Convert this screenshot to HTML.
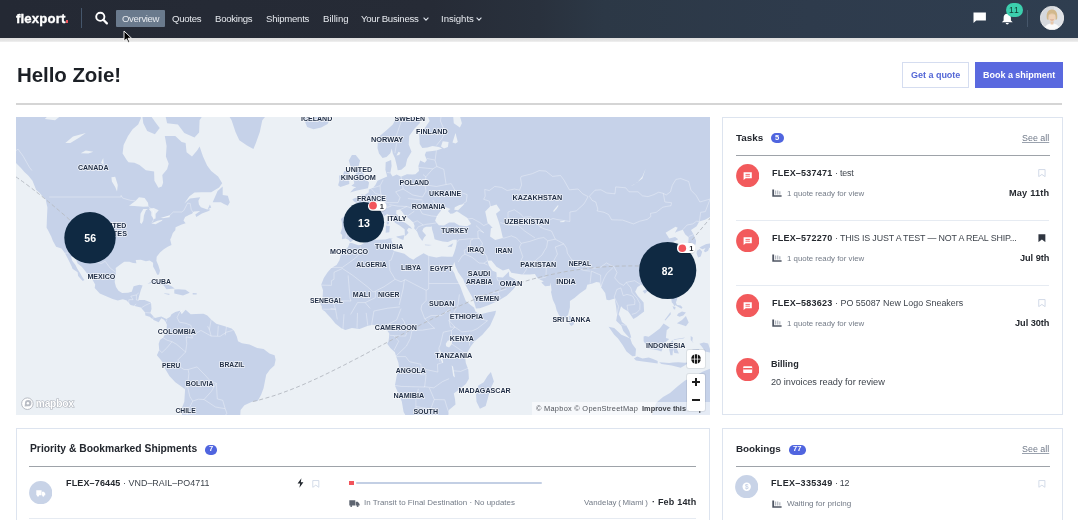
<!DOCTYPE html>
<html><head><meta charset="utf-8">
<style>
*{box-sizing:border-box;margin:0;padding:0}
body>div,body>svg{will-change:transform}
html,body{width:1078px;height:520px;overflow:hidden;background:#fff;font-family:"Liberation Sans",sans-serif;color:#1f2329}
.abs{position:absolute}
.a{position:absolute}
.t{position:absolute;white-space:nowrap}
#nav{position:absolute;left:0;top:0;width:1078px;height:38px;background:linear-gradient(90deg,#262b35 0%,#282f3a 40%,#2d3a4a 80%,#2f3e50 100%)}
#navshadow{position:absolute;left:0;top:38px;width:1078px;height:3px;background:linear-gradient(#dcdcdc,#f4f4f4)}
.nl{position:absolute;top:11px;font-size:9.2px;color:#e8ebef;line-height:12px;white-space:nowrap}
.panel{position:absolute;border:1px solid #dfe6f1;background:#fff}
#map{position:absolute;left:16px;top:117px;width:694px;height:298px;background:#ebf0f5;overflow:hidden}
#map svg{position:absolute;left:0;top:0}
.land{fill:#c6d2e9}
.water{fill:#ebf0f5}
.lb text{font-size:7.6px;font-weight:bold;fill:#1f2d45;text-anchor:middle;stroke:#fff;stroke-width:1.6px;stroke-opacity:.75;paint-order:stroke;stroke-linejoin:round}
.lbl{position:absolute;font-size:6.6px;font-weight:bold;color:#2b3445;letter-spacing:0.1px;white-space:nowrap;text-shadow:0 0 1px #fff,0 0 2px #fff}
</style></head><body>
<div class="a" style="left:0;top:0;width:1078px;height:38.4px;background:linear-gradient(90deg,#242934 0%,#262b36 40%,#29313d 50%,#2c3846 56%,#2e3b4c 75%,#2f3e50 100%)"></div>
<div class="a" style="left:0.00px;top:38.40px;width:1078.00px;height:3.60px;background:linear-gradient(#dedede,#e6e6e6 70%,#f2f2f2);"></div>
<div class="t" style="left:15.90px;top:11.53px;font-size:13.2px;line-height:13.2px;color:#fff;font-weight:bold;letter-spacing:0.137px;-webkit-text-stroke:0.35px #fff;">flexport</div>
<div class="a" style="left:65.70px;top:20.20px;width:2.20px;height:2.50px;background:#f2545b;"></div>
<div class="a" style="left:81.00px;top:8.00px;width:1.00px;height:19.50px;background:#45566b;"></div>
<svg class="a" style="left:94px;top:11px" width="15" height="14" viewBox="0 0 15 14"><circle cx="6.3" cy="5.8" r="4.1" fill="none" stroke="#fff" stroke-width="1.9"/><path d="M9.3 8.8L12.9 12.4" stroke="#fff" stroke-width="2.2" stroke-linecap="round"/></svg>
<div class="a" style="left:116.30px;top:9.70px;width:48.50px;height:17.00px;background:#6a7a8d;border-radius:1px;"></div>
<div class="t" style="left:122.00px;top:13.87px;font-size:9.6px;line-height:9.6px;color:#e6e9ee;letter-spacing:-0.351px;">Overview</div>
<div class="t" style="left:172.10px;top:13.87px;font-size:9.6px;line-height:9.6px;color:#e6e9ee;letter-spacing:-0.258px;">Quotes</div>
<div class="t" style="left:214.80px;top:13.87px;font-size:9.6px;line-height:9.6px;color:#e6e9ee;letter-spacing:-0.261px;">Bookings</div>
<div class="t" style="left:265.60px;top:13.87px;font-size:9.6px;line-height:9.6px;color:#e6e9ee;letter-spacing:-0.239px;">Shipments</div>
<div class="t" style="left:322.60px;top:13.87px;font-size:9.6px;line-height:9.6px;color:#e6e9ee;letter-spacing:-0.002px;">Billing</div>
<div class="t" style="left:361.00px;top:13.87px;font-size:9.6px;line-height:9.6px;color:#e6e9ee;letter-spacing:-0.263px;">Your Business</div>
<div class="t" style="left:440.70px;top:13.87px;font-size:9.6px;line-height:9.6px;color:#e6e9ee;letter-spacing:-0.035px;">Insights</div>
<svg class="a" style="left:422.5px;top:17.2px" width="6" height="4" viewBox="0 0 6 4"><path d="M0.6 0.7L3 3.1L5.4 0.7" fill="none" stroke="#dfe4ec" stroke-width="1.1"/></svg>
<svg class="a" style="left:476.3px;top:17.2px" width="6" height="4" viewBox="0 0 6 4"><path d="M0.6 0.7L3 3.1L5.4 0.7" fill="none" stroke="#dfe4ec" stroke-width="1.1"/></svg>
<svg class="a" style="left:973px;top:11.5px" width="13.5" height="11.5" viewBox="0 0 13.5 11.5"><path d="M0.5 0.5H12.9V8.4H3.2L0.5 11Z" fill="#fff"/></svg>
<svg class="a" style="left:1000.5px;top:12.5px" width="12.5" height="11.5" viewBox="0 0 12.5 11.5"><path d="M6.25 0.8C3.6 0.8 2.6 2.8 2.6 5V7.6L0.8 9.2H11.7L9.9 7.6V5C9.9 2.8 8.9 0.8 6.25 0.8Z" fill="#fff"/><path d="M4.7 10H7.8A1.55 1.4 0 0 1 4.7 10Z" fill="#fff"/></svg>
<div class="a" style="left:1005.70px;top:3.30px;width:16.50px;height:13.50px;background:#3ccfae;border-radius:7px;"></div>
<div class="t" style="left:1008.50px;top:6.32px;font-size:8.6px;line-height:8.6px;color:#113a33;letter-spacing:0.787px;">11</div>
<div class="a" style="left:1027.20px;top:9.90px;width:1.00px;height:16.50px;background:#46576b;"></div>
<svg class="a" style="left:1040px;top:6px" width="24" height="24" viewBox="0 0 24 24"><defs><clipPath id="av"><circle cx="12" cy="12" r="11.6"/></clipPath></defs><g clip-path="url(#av)"><rect x="0" y="0" width="24" height="24" fill="#d5d8dc"/><rect x="14" y="0" width="10" height="24" fill="#dfe2e6"/><path d="M4 24C5 19 8.5 17.6 12 17.6S19 19 20 24Z" fill="#fafafa"/><path d="M10.6 15.5H13.4V18.5H10.6Z" fill="#e8c7aa"/><path d="M6.8 12.5C6 6.5 8.4 3.6 12 3.6S18 6.5 17.2 12.5C16.6 14 15.8 14.2 15.5 13.5L15.2 9C14 7.8 10 7.8 8.8 9L8.5 13.5C8.2 14.2 7.4 14 6.8 12.5Z" fill="#d2b88c"/><ellipse cx="12" cy="11.6" rx="3.3" ry="4" fill="#efd2b8"/><path d="M8.5 9.2C9.5 6.8 14.5 6.8 15.5 9.2C14 8 10 8 8.5 9.2Z" fill="#d9c29a"/><path d="M10.4 13.6Q12 14.6 13.6 13.6" stroke="#c08a78" stroke-width="0.6" fill="none"/></g><circle cx="12" cy="12" r="11.7" fill="none" stroke="#f0f0f0" stroke-width="0.8"/></svg>
<div class="t" style="left:17.00px;top:65.35px;font-size:20.5px;line-height:20.5px;color:#1c2026;font-weight:bold;letter-spacing:-0.070px;">Hello Zoie!</div>
<div class="a" style="left:901.50px;top:62.00px;width:67.40px;height:26.00px;background:#fff;border:1px solid #d5ddf0;box-sizing:border-box;"></div>
<div class="t" style="left:910.70px;top:71.38px;font-size:9px;line-height:9px;color:#5467d6;font-weight:bold;letter-spacing:-0.018px;">Get a quote</div>
<div class="a" style="left:974.50px;top:62.00px;width:87.70px;height:26.00px;background:#5a69df;"></div>
<div class="t" style="left:982.70px;top:71.38px;font-size:9px;line-height:9px;color:#fff;font-weight:bold;letter-spacing:-0.020px;">Book a shipment</div>
<div class="a" style="left:16.00px;top:103.00px;width:1046.00px;height:1.50px;background:#d5d5d5;"></div>
<svg class="a" style="left:120px;top:28px;z-index:50" width="16" height="18" viewBox="120 28 16 18"><path d="M124 31L124 41.2L126.4 38.9L128.2 42.4L129.7 41.7L128 38.3L131.5 38.2Z" fill="#000" stroke="#fff" stroke-width="0.9" stroke-linejoin="round"/></svg>

<!-- map -->
<div id="map"><svg width="694" height="298" viewBox="0 0 694 298"><defs><filter id="sh" x="-30%" y="-50%" width="160%" height="200%"><feDropShadow dx="0" dy="0.5" stdDeviation="0.7" flood-color="#000" flood-opacity="0.25"/></filter></defs><path class="land" d="M-35.2 -73.1L124.8 -73.1L124.8 1.5L122.2 7.5L116.6 12.2L112.0 18.9L107.6 28.0L106.6 36.6L110.7 43.0L112.5 45.3L118.4 45.8L123.5 48.1L129.9 53.2L138.1 54.5L138.4 63.7L142.4 70.8L145.8 69.5L147.1 65.8L146.3 58.1L151.1 52.3L152.7 46.7L149.9 39.6L150.6 29.0L148.8 18.9L159.3 18.9L165.7 24.9L169.6 25.9L170.6 35.2L176.0 39.6L181.1 33.6L183.6 29.6L187.0 39.6L191.1 48.6L195.2 54.1L202.1 59.4L206.2 66.2L203.1 70.4L195.2 75.2L184.9 75.2L178.5 75.6L173.4 79.2L168.3 86.5L173.9 81.5L184.2 80.3L182.4 83.8L182.9 87.6L184.9 90.2L191.3 92.4L195.2 90.6L193.9 87.6L191.8 92.1L194.4 92.8L192.6 93.9L185.9 96.4L180.3 100.0L179.3 97.5L184.2 93.9L177.8 94.6L176.0 96.8L173.4 97.8L169.1 100.0L167.5 103.5L169.6 106.2L165.7 107.6L159.6 110.3L159.3 113.3L156.8 116.0L155.2 120.5L154.2 122.5L155.5 127.9L151.7 129.7L147.8 132.2L144.0 135.6L140.7 139.8L140.4 143.7L142.4 148.4L144.0 153.8L143.0 157.5L141.2 157.8L139.4 153.8L137.1 149.5L137.1 145.7L133.7 143.4L129.9 144.3L124.8 142.8L119.7 143.1L120.4 146.3L117.1 146.0L113.3 144.8L108.2 144.8L104.3 147.5L99.7 151.0L100.0 155.5L98.7 165.1L100.0 170.0L102.5 173.8L106.1 176.0L112.0 175.7L115.8 174.7L117.6 169.2L123.5 167.8L126.6 168.4L124.8 173.3L123.0 179.5L122.2 183.0L128.6 183.0L135.0 185.4L135.5 192.0L134.3 195.9L138.9 201.1L145.3 199.5L150.4 202.1L154.2 199.8L155.5 197.2L159.3 195.1L163.9 193.8L165.7 197.2L169.6 192.7L174.7 197.2L179.8 196.9L187.5 196.7L191.3 198.5L195.2 202.4L200.3 206.8L208.0 209.1L215.6 211.6L218.2 214.0L220.8 219.6L222.0 224.2L225.9 226.2L233.5 227.5L241.2 231.1L247.6 231.9L253.5 236.5L258.6 238.3L259.6 242.7L258.4 248.6L254.0 252.5L250.2 257.8L248.9 264.4L247.6 271.0L245.1 277.8L241.7 284.1L236.1 284.7L228.4 288.3L224.6 293.1L224.1 300.3L220.8 307.7L195.2 336.1L164.5 336.1L165.7 304.7L166.2 290.3L168.3 284.7L169.1 272.4L165.7 269.7L159.3 265.2L153.4 259.1L149.6 252.5L145.3 243.4L140.9 238.3L143.2 232.9L142.7 226.8L144.0 222.9L147.1 220.4L150.4 215.2L150.9 207.5L148.3 203.1L145.3 201.3L142.7 205.2L137.6 203.1L133.7 199.8L129.4 198.5L129.1 195.4L124.8 190.6L119.7 189.3L114.6 188.0L110.7 183.5L106.9 182.2L101.8 183.5L96.6 181.9L90.2 179.2L83.8 176.6L78.7 171.1L79.2 167.6L76.2 162.3L72.3 158.1L69.0 153.8L65.7 149.8L61.6 146.6L59.5 141.3L54.9 138.9L56.2 143.7L59.5 148.1L61.3 151.8L63.9 155.8L66.4 160.3L68.5 163.1L66.7 164.0L62.1 158.9L61.6 155.3L56.5 151.8L55.7 149.5L52.4 142.8L49.0 136.2L45.5 131.6L40.1 129.7L36.8 123.8L35.2 119.6L31.9 113.0L30.6 110.7L30.9 102.1L31.4 90.6L29.6 82.3L27.5 80.3L23.7 76.0L20.1 72.8L16.5 63.7L12.2 58.5L8.4 55.0L4.5 50.4L-0.1 45.8L-4.4 40.1L-9.6 32.1L-35.2 31.1ZM126.1 -2.8L133.7 -2.8L140.1 6.3L143.7 11.0L138.9 17.2L131.2 13.9L127.3 6.3ZM149.1 -2.8L187.5 -2.8L183.6 3.3L183.1 15.6L178.5 20.5L168.3 16.1L161.9 7.5L151.1 6.3ZM208.0 -9.3L215.6 3.3L219.5 15.0L223.3 23.3L231.0 28.5L237.4 32.1L239.9 25.9L243.8 15.0L246.3 3.3L256.6 -9.3ZM196.7 85.3L201.6 74.0L206.7 69.5L206.7 78.0L211.8 78.8L213.8 85.3L211.8 88.7L208.0 86.9L204.9 85.3ZM131.4 166.7L137.6 163.4L142.7 163.7L150.4 167.0L155.5 169.2L158.8 171.4L150.4 172.2L147.8 168.4L141.4 166.5L135.8 165.9ZM158.3 172.5L162.4 172.2L169.6 172.8L173.7 175.7L167.0 178.4L158.3 176.6ZM176.7 176.0L180.8 176.3L180.6 177.4L176.7 177.4ZM148.3 176.3L153.4 176.8L153.4 177.9L148.3 176.8ZM380.7 -73.1L380.7 0.3L376.8 7.5L370.5 13.3L362.0 20.5L361.5 31.1L363.0 36.6L366.6 41.0L370.5 40.1L374.3 36.2L375.8 31.6L376.8 36.6L378.9 41.0L380.9 49.1L381.7 53.2L385.3 52.7L389.6 49.1L391.2 42.0L395.5 34.7L392.7 27.5L393.2 18.9L398.6 11.6L403.7 6.3L405.8 -1.6L411.4 -1.6L413.7 3.9L408.8 11.0L403.2 16.7L403.7 27.0L406.3 31.1L411.4 30.6L416.5 29.0L422.9 30.1L426.2 31.6L420.4 33.6L410.1 34.7L408.8 38.1L410.9 43.0L408.8 45.8L404.2 43.4L402.4 49.1L403.0 54.1L399.4 57.2L396.3 57.6L390.9 57.2L385.0 59.8L380.7 57.6L376.6 59.4L374.3 55.9L375.6 49.1L375.1 43.0L369.7 45.3L369.4 52.7L371.2 59.4L366.6 61.5L361.5 63.7L359.4 67.9L357.1 70.8L352.8 72.4L352.8 75.2L348.7 78.0L345.4 77.6L343.8 81.1L339.7 80.7L336.4 82.3L338.0 84.6L342.3 86.5L345.6 90.6L345.4 96.8L344.1 100.7L338.5 100.3L333.3 100.0L328.2 99.6L324.9 102.1L325.9 105.6L326.2 110.7L324.4 116.3L326.2 118.0L325.9 122.2L329.5 121.5L332.6 122.8L334.4 125.3L337.2 123.1L343.1 122.8L347.4 118.3L349.2 116.3L347.9 114.0L351.0 109.0L356.9 105.6L356.6 101.7L360.2 100.7L364.1 101.7L367.9 99.3L371.2 97.1L374.8 98.9L375.6 102.4L379.4 105.9L383.2 108.3L388.6 112.3L388.9 118.3L389.6 118.9L390.9 117.6L392.5 115.7L390.9 113.3L392.7 110.7L396.0 112.0L394.8 110.0L389.6 105.9L384.5 103.8L383.2 100.0L380.2 96.8L380.4 93.2L383.8 92.4L385.8 94.2L387.9 97.5L393.5 102.1L397.3 105.6L398.6 109.0L398.1 111.3L401.2 114.7L403.0 119.6L406.3 124.1L408.1 120.5L410.1 118.3L406.3 114.0L407.6 111.0L410.1 109.7L415.2 109.7L415.7 109.0L416.0 112.3L417.5 117.3L418.6 122.2L420.9 123.1L426.7 124.4L431.9 125.0L437.0 122.8L440.8 122.8L440.6 126.9L439.5 131.6L438.0 136.2L436.5 139.8L431.4 139.8L425.5 139.5L420.4 140.4L412.7 138.9L407.6 136.2L399.9 140.7L397.3 142.8L393.5 140.7L388.4 136.8L382.0 135.0L378.1 134.0L375.1 131.6L376.8 126.9L375.1 122.5L376.8 121.8L373.8 121.2L369.2 122.5L361.5 122.8L356.4 122.8L351.3 124.1L344.9 127.9L342.3 128.2L335.9 126.0L333.6 126.0L332.1 130.0L329.5 132.8L324.9 136.5L323.6 143.1L320.6 148.1L315.4 151.0L311.6 155.3L307.8 160.9L305.2 167.8L307.0 173.3L306.5 181.4L303.9 186.2L305.7 189.3L306.0 192.5L309.0 194.6L311.1 196.9L314.9 201.1L319.3 206.5L325.7 211.4L329.5 212.9L335.9 211.1L343.6 211.9L351.3 209.1L356.4 207.8L360.2 208.3L364.1 213.2L367.9 212.7L371.2 213.4L373.3 216.5L373.0 220.4L372.5 224.2L371.2 226.8L374.3 231.1L378.9 235.2L380.2 239.6L382.5 246.0L383.2 251.7L380.7 259.1L378.9 268.4L385.8 284.4L387.6 295.1L390.9 300.6L393.5 307.7L399.9 323.1L425.5 319.9L431.9 301.8L432.9 293.1L439.5 287.5L439.0 281.9L437.8 276.5L442.1 273.2L449.8 267.0L452.9 261.7L452.3 252.5L449.8 246.0L449.3 241.6L451.1 235.7L454.9 229.3L458.7 224.2L466.4 217.8L474.1 208.8L479.2 197.2L480.0 193.8L471.5 195.4L463.9 197.4L459.5 194.6L458.0 190.6L454.9 188.3L449.8 184.0L447.2 177.4L444.2 169.2L440.1 161.2L438.3 156.1L435.2 151.5L432.1 144.0L433.1 148.1L436.5 150.1L438.3 145.1L439.5 149.5L442.1 155.3L447.2 162.3L449.3 167.8L452.3 173.3L456.2 180.0L458.2 185.4L460.0 191.4L463.9 191.2L472.8 188.0L482.3 183.8L490.7 178.7L494.6 174.9L498.4 170.9L501.7 165.1L498.4 162.0L493.3 159.5L492.8 154.4L490.7 156.7L486.9 160.6L480.7 160.1L480.5 155.5L479.7 155.0L476.6 153.8L472.8 148.6L471.5 143.7L475.4 143.4L477.9 146.6L480.5 149.8L486.9 153.5L492.8 151.8L495.3 155.8L506.1 157.5L513.8 157.5L518.9 157.0L521.4 160.9L524.8 163.1L527.8 164.3L525.3 165.4L529.1 169.2L534.2 168.7L534.7 165.6L535.5 173.3L535.0 174.9L536.8 182.7L539.3 188.0L540.6 193.3L543.2 198.5L547.0 203.4L549.6 201.1L552.1 197.7L553.9 190.6L553.9 184.0L558.5 181.1L563.7 176.6L570.1 171.9L571.3 167.8L576.5 166.5L580.3 165.1L583.6 165.6L584.9 170.0L589.2 176.0L590.5 182.7L593.1 183.2L598.7 181.4L600.2 190.6L601.0 198.5L600.2 203.7L605.4 208.8L607.2 214.0L610.5 217.8L613.6 220.9L615.3 220.4L613.3 214.0L610.2 208.3L605.9 205.0L604.3 200.3L602.6 197.2L605.1 189.3L607.2 191.4L612.3 194.6L617.4 201.9L621.2 199.8L628.1 194.6L627.6 185.4L621.7 178.7L619.2 174.7L621.5 170.0L625.1 167.8L630.2 169.2L631.5 171.1L634.0 167.8L639.1 165.9L646.8 164.0L653.2 158.1L655.8 153.3L659.9 148.1L660.9 143.7L658.3 141.3L660.4 138.6L657.1 134.7L654.0 128.5L656.5 125.3L662.2 122.2L659.1 119.9L653.2 121.5L651.2 118.3L649.6 115.7L654.5 112.7L659.6 109.7L661.7 110.7L658.9 115.7L660.9 114.7L666.8 112.7L669.1 117.3L672.7 120.5L671.9 128.5L675.0 129.7L679.6 127.5L680.1 123.8L677.5 117.3L675.0 113.0L680.6 109.3L683.2 104.5L689.0 102.8L695.4 99.3L707.0 83.8L719.8 -73.1ZM334.1 75.6L341.0 73.6L352.0 71.2L353.1 65.4L349.5 62.0L347.9 57.2L344.6 52.3L342.3 50.0L344.1 43.4L339.7 38.1L335.9 38.1L332.8 43.4L334.4 49.1L336.2 55.0L340.5 55.4L339.5 57.6L341.0 59.8L341.0 62.4L336.9 62.4L338.0 64.5L338.2 66.6L335.4 68.7L340.3 70.4L338.0 71.2ZM333.3 67.0L333.1 62.4L333.6 57.2L332.1 54.1L328.2 54.1L326.9 58.1L323.1 58.5L323.4 63.7L322.1 68.3L324.4 69.9L328.2 68.7ZM291.1 9.9L297.5 12.2L305.2 10.4L311.6 6.9L314.2 1.5L311.6 -4.1L302.6 -4.7L291.1 -5.4L287.3 0.3ZM380.4 119.6L388.6 118.0L387.3 123.1L380.7 120.2ZM369.7 115.7L373.3 115.3L373.8 109.0L369.9 108.6ZM370.7 107.6L372.8 107.3L373.0 102.1L370.7 104.2ZM408.8 127.5L416.0 127.9L412.7 128.5L409.1 128.2ZM431.4 129.4L437.2 126.3L435.7 129.7L432.6 129.7ZM474.9 255.1L477.9 264.4L475.4 269.7L472.8 277.8L469.7 288.9L463.9 291.7L460.5 284.7L460.0 277.8L462.3 268.4L467.7 265.2L471.5 259.1ZM552.9 199.0L554.7 199.8L556.7 202.9L558.0 205.5L557.5 207.8L555.0 208.9L553.4 206.8ZM656.0 163.7L659.9 157.2L660.6 158.7L657.8 166.7ZM626.6 174.1L631.5 171.7L632.7 173.0L628.9 176.8ZM683.4 130.7L685.2 129.4L690.3 126.9L696.2 126.3L698.8 121.5L703.1 120.2L707.0 114.0L707.0 109.7L710.8 108.0L711.8 114.0L709.5 118.3L709.0 124.7L707.7 128.5L703.9 129.7L699.3 129.7L696.2 133.1L694.2 130.7L689.0 131.3L686.5 132.2ZM680.9 133.7L683.9 131.9L686.2 134.7L684.7 139.5L682.1 140.4L680.6 136.2ZM687.8 134.0L689.8 130.7L693.1 131.0L692.1 133.7L689.3 135.3ZM707.0 107.3L706.7 102.8L710.8 93.5L715.9 97.5L721.0 101.0L717.2 102.4L710.8 103.8L708.2 105.6ZM712.1 91.3L713.4 76.0L712.1 59.4L715.1 72.0L715.9 89.5ZM657.3 176.0L661.7 176.0L661.4 180.0L660.9 182.7L659.9 185.4L660.9 188.0L664.7 188.5L666.5 190.6L665.5 191.7L662.4 190.1L659.6 188.3L658.3 189.1L657.1 186.7L655.8 185.4L655.3 182.2ZM656.5 189.3L659.6 190.1L659.1 192.5L657.8 192.2ZM660.9 206.2L666.0 203.1L669.9 199.0L672.7 205.5L669.9 209.3L666.5 208.0ZM662.2 196.4L666.0 194.6L669.9 195.4L667.3 198.5L663.5 199.8L660.9 198.5ZM648.6 202.9L654.5 195.1L654.8 197.2L649.4 203.4ZM592.6 209.8L598.2 210.9L605.4 217.8L614.3 221.6L616.1 226.8L620.0 231.9L619.4 239.1L616.4 239.3L610.5 234.4L606.6 228.0L602.0 221.6L598.2 217.8ZM617.9 241.6L621.2 239.6L626.6 241.4L632.7 240.6L637.1 241.9L641.7 244.0L641.7 246.5L632.7 245.3L625.1 244.2L620.0 243.4ZM643.0 245.3L646.8 245.5L653.2 246.0L657.1 245.5L662.2 245.3L668.6 245.8L673.7 245.3L668.6 248.6L664.7 250.7L655.8 248.6L645.5 247.1ZM627.6 219.6L629.2 219.1L632.7 219.8L637.9 216.0L643.8 211.4L647.6 206.5L653.7 210.6L650.7 213.2L649.9 221.1L653.2 221.9L649.4 225.5L646.8 230.6L645.5 234.4L641.7 233.2L634.5 231.9L630.7 231.6L630.2 228.0L627.6 224.2ZM654.5 238.3L656.5 238.3L657.1 231.4L658.3 236.0L662.9 236.5L659.6 229.3L664.2 226.8L658.3 227.8L656.5 222.9L667.3 221.6L669.1 220.4L658.3 222.2L655.3 224.2L653.2 232.6ZM674.7 219.1L676.8 220.4L676.3 224.2L677.8 226.5L674.7 222.9ZM683.4 226.8L687.8 225.5L692.1 226.5L694.2 232.6L701.3 228.0L709.5 230.9L719.8 234.4L732.5 249.9L707.0 247.3L701.8 244.7L701.3 237.0L689.0 234.4L686.5 230.6ZM676.3 232.4L683.4 232.1L682.6 233.9L676.8 233.7ZM634.0 303.0L640.5 285.5L647.0 280.0L654.0 276.0L662.0 269.0L669.0 263.5L679.0 259.0L687.0 254.5L696.0 251.0L696.0 303.0Z"/><path class="water" d="M113.0 88.7L119.7 83.8L123.0 80.3L128.6 81.1L132.0 85.7L132.5 89.5L127.3 89.8L118.4 89.1ZM124.0 105.6L125.6 106.9L127.3 103.8L127.9 98.6L129.9 93.2L132.0 92.1L127.3 92.1L124.5 96.8ZM132.7 91.7L137.6 91.0L142.7 93.2L139.6 96.8L139.6 101.4L137.6 102.1L135.3 98.6L135.3 95.0ZM135.3 106.6L141.4 103.8L146.5 102.8L146.0 103.8L139.6 107.3ZM144.5 101.0L153.7 98.2L153.7 100.3L146.5 101.0ZM95.4 60.2L99.2 59.8L101.8 67.9L101.0 74.4L99.2 69.9L95.9 64.5ZM64.7 36.2L69.8 33.6L77.4 34.7L72.3 36.6ZM49.3 25.9L57.0 19.5L69.8 16.1L63.4 20.5L54.4 25.9ZM28.8 2.1L36.5 -6.0L46.7 -2.8L39.1 3.3ZM85.1 45.8L87.2 41.0L87.7 48.1ZM419.1 103.8L420.4 100.3L421.9 97.5L424.7 93.9L427.5 89.5L430.6 90.6L434.4 92.1L431.9 93.9L434.4 96.8L437.0 96.4L440.8 94.2L443.4 95.7L445.9 97.5L451.1 100.7L455.2 106.9L451.1 109.3L443.4 108.6L438.3 105.6L433.1 105.6L428.0 108.6L422.9 108.3L420.4 105.6ZM438.3 92.8L442.1 93.2L445.9 89.5L448.5 86.9L443.4 88.0L438.8 90.2ZM474.1 89.5L480.5 87.6L484.3 93.2L480.0 96.8L483.0 105.6L484.3 110.0L486.9 120.9L479.2 123.1L474.1 119.6L474.9 111.3L476.6 110.7L471.5 105.6L470.3 99.6L469.2 94.6ZM543.7 104.5L548.8 103.5L548.3 104.9L544.5 105.2ZM429.8 226.8L431.9 223.4L435.7 223.4L435.7 227.3L433.1 230.6L430.1 229.3ZM423.4 232.6L424.2 233.2L427.3 245.5L426.2 246.0L423.4 239.6ZM435.7 248.6L437.0 249.4L439.0 260.4L437.2 259.1ZM425.0 29.6L426.7 24.3L432.6 24.9L431.9 30.1L428.0 31.6ZM436.5 25.4L439.5 16.1L441.8 24.9L439.5 26.4ZM437.0 -2.8L437.8 6.3L443.9 10.4L445.9 6.3L443.4 -2.8L451.1 -6.0ZM614.3 69.5L617.4 67.9L626.4 61.5L629.7 51.4L626.4 59.4L621.2 65.4ZM537.0 94.2L539.5 91.0L541.8 88.2L542.6 88.8L540.5 92.0L538.0 94.8ZM380.4 38.6L382.5 34.7L384.5 35.7L383.2 38.1Z"/><path d="M33.2 80.0L105.1 80.0L105.1 78.4L106.6 81.1L114.6 83.4L119.4 83.8M132.5 89.5L137.6 93.9L137.8 102.1L136.0 105.6M146.5 101.0L152.9 99.3L157.3 95.0L165.7 95.0L167.8 93.5L171.6 86.1L174.2 86.5L175.2 92.4L177.2 95.7M-12.1 29.6L-7.0 31.1L-3.2 36.2L2.0 32.1L7.1 39.1L13.5 50.4L16.0 53.6M49.0 136.2L55.2 135.6L64.7 139.8L71.8 139.8L76.2 138.3L81.3 144.8L85.1 146.6L89.2 144.3L94.1 151.0L100.0 155.5M112.8 186.7L112.8 182.7L117.1 182.7L114.8 179.2L120.4 177.9L122.7 176.0M120.4 177.9L120.4 183.0L123.0 183.5M120.2 187.0L118.1 188.8M135.8 185.4L129.4 188.3L125.3 190.9M134.5 195.9L129.4 195.6M137.3 199.5L136.6 203.4M150.9 202.4L149.4 205.7M165.7 193.3L163.4 195.6L161.1 200.6L163.4 205.2L169.3 206.2L174.9 208.3L176.5 215.2L175.2 217.0L176.5 221.1L170.1 219.8L170.8 226.8L169.6 235.0M184.9 213.4L176.5 218.6M195.2 202.4L193.4 212.7L191.6 209.1M193.4 212.7L195.2 219.1L204.1 219.3L210.5 215.2L216.7 213.4M202.3 208.8L201.6 219.1M210.5 209.6L209.2 218.3M195.2 219.1L184.9 213.4M146.5 220.4L151.1 223.2L156.0 224.7L160.6 227.3L169.6 235.0L161.9 242.9L163.7 249.9L168.0 252.5L172.1 252.5L181.1 249.9L190.0 259.1L194.6 264.4L200.3 266.2L201.3 281.9L206.7 283.3L209.2 291.7L211.0 296.6L201.3 305.3M143.2 232.9L145.8 235.7L150.4 231.4L156.0 224.7M168.5 271.8L171.4 269.2L172.1 263.6L172.9 256.7L172.1 252.5M171.4 269.2L173.9 279.7L176.7 284.1L182.4 282.2L188.0 282.5L195.2 274.6L200.3 266.2M176.7 284.1L173.7 290.3L170.3 299.5L169.6 310.7M188.0 282.5L199.5 290.0L209.2 291.7M344.1 100.7L356.9 104.2M330.8 105.6L332.3 106.6L330.8 114.0L329.8 121.5M355.1 71.6L359.4 76.4L365.1 78.0L369.7 80.0L368.1 85.3L364.1 90.6L366.6 91.7L365.6 94.6L367.9 99.3M385.0 59.8L386.1 65.4L387.1 72.0L379.7 74.8L384.0 80.7L382.0 85.7L373.3 85.7L368.1 85.3M371.0 55.4L374.0 55.9M367.1 62.8L364.1 68.7L364.3 73.2L365.1 78.0M357.1 70.8L364.1 68.7M387.1 72.0L396.8 78.0L406.5 80.0L410.1 74.0L408.8 67.9L409.9 59.8L407.0 57.6M408.8 67.9L420.4 69.5L430.1 67.5L435.2 66.6L439.5 74.4L446.5 76.0L451.1 77.6L450.3 84.6L446.5 87.2M409.9 59.8L416.8 51.8L420.9 49.5L427.8 52.3L430.1 67.5M402.7 50.4L416.8 51.8M410.9 41.5L418.8 43.0M420.4 33.6L419.1 43.4L420.9 49.5M420.4 28.5L425.5 22.2L429.3 15.6L424.4 3.9L425.5 -2.8M378.9 36.2L380.7 25.9L379.7 20.5L384.5 6.3L388.4 -2.8M409.9 -1.6L410.1 -16.0M416.8 83.0L420.9 89.5L425.5 93.5M407.3 84.2L402.7 90.2L406.3 96.8L415.2 98.9L421.9 99.6M420.4 105.9L416.0 106.6L410.1 107.3L407.3 108.0L402.4 109.7L399.9 113.3M391.9 81.5L406.5 83.0M373.0 87.6L382.0 89.1L390.9 89.5M366.6 91.7L375.3 89.1M383.8 92.8L390.9 89.5L397.3 91.7L402.7 90.2M389.6 100.3L398.3 94.2M397.3 105.6L401.2 103.8L407.3 108.0M474.6 90.2L473.3 84.2L467.7 82.3L469.2 79.2L468.7 72.4L473.3 73.6L478.7 69.5L485.6 70.4L491.2 73.6L498.4 72.0L503.5 73.2L505.6 67.9L504.5 61.1L505.3 59.4L516.3 56.7L523.2 53.6L529.9 54.1L536.5 59.4L544.5 58.5L547.8 62.8L553.4 72.8L562.1 72.0L566.7 76.8L572.1 79.6M573.4 79.2L579.0 73.2L584.9 72.8L590.8 76.0L599.0 76.8L599.7 69.9L609.7 70.8L613.0 74.8L622.0 74.8L626.4 78.8L632.0 79.6L637.9 77.6L642.7 75.2L647.3 76.4M573.4 79.2L576.2 83.4L579.8 85.0L581.8 92.1L581.1 93.9L588.0 95.3L592.6 97.5L595.6 102.8L606.6 103.1L617.4 106.9L623.8 104.2L631.2 102.4L634.8 99.6L634.5 96.4L640.2 95.3L646.8 90.2L650.2 89.5L655.0 88.7L655.5 85.7L648.9 85.0L647.3 76.4M647.3 76.4L650.2 78.0L654.5 74.8L656.3 68.3L659.9 62.4L664.7 61.5L672.7 64.5L675.0 73.2L680.1 78.4L683.9 85.0L691.9 82.7L694.2 81.9L689.3 94.6L684.7 95.3L683.7 102.4L683.2 104.5M572.1 79.6L568.0 86.9L560.3 93.9L553.9 95.0L553.9 104.5M666.8 112.7L671.1 108.0L676.8 106.9L680.6 104.2L683.2 104.5M672.7 119.6L677.3 117.6M539.3 122.2L547.8 126.9L550.6 131.3L551.4 136.2L556.0 143.1L561.9 145.1L574.1 149.8L576.2 151.5L584.1 150.4L590.5 146.0L594.9 148.4L597.9 149.5L601.0 155.5L598.7 160.9L603.3 166.2L607.7 168.4L610.2 165.4L618.7 163.7L625.1 167.8M553.7 147.2L561.9 151.5L568.3 153.5L574.1 154.1M574.1 166.5L575.4 154.1L584.6 158.1L584.9 170.0M584.9 170.0L587.7 162.3L590.8 156.4L596.9 150.7M523.2 161.7L529.9 160.1L530.4 150.4L537.6 144.0L539.6 140.4L541.4 137.1L539.3 130.0L547.8 126.9M506.8 157.8L510.7 152.1L509.1 148.6L504.5 144.3L506.8 139.8L504.5 133.1L503.5 130.0L505.3 126.3L500.4 120.9L495.3 118.9L488.9 120.9L486.6 121.2M504.5 144.3L518.9 144.0L526.0 138.0L528.6 133.4L530.6 130.3L531.7 123.8L539.3 122.2M505.3 126.3L513.8 124.4L522.2 121.5L527.8 120.5L531.7 123.8M484.3 105.6L492.0 108.0L492.0 95.0L498.4 92.8L504.8 97.1L507.4 100.3L514.8 99.6L517.8 102.4L524.2 110.0L530.4 104.5L537.0 101.4L540.6 102.4L553.9 104.5M492.0 108.0L502.2 108.3L508.6 114.0L518.9 120.9M524.2 110.0L527.8 111.7L535.5 114.0L539.3 122.2M471.5 143.7L470.8 139.5L467.7 135.0L464.9 131.6L466.4 126.3L463.3 121.5L462.1 120.9L461.8 114.3L463.3 113.3M471.5 143.7L467.9 146.3L463.1 146.0L456.2 140.4L449.0 137.1L448.0 133.4L453.9 130.3L454.6 123.4L457.2 121.8M441.3 125.3L442.6 122.8L446.5 122.5L452.9 121.8L457.2 121.8L463.3 121.5M458.2 181.6L462.8 179.0L470.3 179.8L473.6 176.8L481.8 174.7L490.7 171.9M481.8 174.7L484.6 181.1M490.7 164.5L490.0 164.8L481.8 163.7L480.7 160.1M442.1 145.1L445.9 139.2L449.0 137.1M467.9 146.3L471.5 148.1M450.3 102.1L456.2 101.4L463.9 105.6L467.7 108.6L472.8 106.2M460.0 108.6L467.7 115.7L463.3 113.3M600.8 198.5L602.6 189.3L598.2 180.0L600.8 172.5L604.9 170.9M604.9 170.9L607.2 178.7L611.0 177.4L616.6 179.0L618.9 183.2L618.7 187.5M618.7 187.5L611.0 188.3L612.0 193.8M615.9 197.4L620.5 195.9L623.8 192.5L624.0 186.7M624.0 186.7L621.2 181.4L616.1 175.5L614.8 170.9L610.2 165.4M605.4 207.5L610.0 208.3M412.7 138.9L412.7 166.5L443.4 166.5M412.7 166.5L412.7 171.9L410.1 173.3L410.1 183.5M410.1 173.3L389.4 162.6L385.0 164.8M378.1 134.7L375.1 143.1L373.0 143.7L374.0 153.8L379.2 162.3L385.0 164.8M379.2 162.3L367.9 169.8L359.4 174.1L357.1 174.9L351.5 169.8L336.4 158.1L326.4 151.5M326.4 150.4L335.9 143.7L339.5 141.0L344.3 135.6L344.3 129.1M314.9 150.4L326.4 150.4M305.2 168.1L315.4 168.4L315.4 163.7L318.0 162.3L318.0 155.3L326.4 151.5M317.5 185.9L319.3 183.8L334.9 184.0L334.1 181.4L332.1 158.4M306.0 192.2L318.0 192.2L319.5 192.2L317.5 185.9L312.1 181.1L307.0 181.4M388.4 162.6L387.1 171.9L383.2 188.0M357.9 194.0L371.7 191.2L383.8 189.9M410.1 183.5L405.8 188.0L405.0 192.0L408.8 201.9M408.8 201.9L418.6 211.4M408.8 201.9L415.2 198.5L425.5 198.5L433.1 192.7L435.7 199.8M443.4 177.4L442.1 187.2L435.7 199.8L433.1 203.7M433.1 203.7L439.0 210.1L445.9 215.0L453.6 214.0L455.9 214.0L461.3 211.6L471.5 203.7L461.3 201.1L458.7 195.9M453.6 228.6L453.6 217.0M449.0 236.2L435.5 226.8M370.5 212.7L371.7 207.5L380.7 202.9L385.0 191.7M373.8 218.3L377.6 218.6L389.6 219.1L390.9 215.2L388.4 205.0L385.8 201.1M396.0 213.2L406.3 213.2L418.8 211.1M427.3 215.2L424.4 227.5L422.9 231.1L423.9 244.7M426.7 245.5L421.4 247.3L421.9 255.1L410.1 252.5L405.0 249.9M379.9 239.1L390.4 229.1L394.3 221.6L396.0 213.2M377.6 218.6L382.7 224.2L378.1 233.2M378.9 268.4L385.0 269.4L396.0 269.7L408.6 270.0L410.1 257.8L404.7 257.8L405.0 247.3L393.5 244.7L389.6 239.6L380.2 239.6M399.9 281.9L399.9 289.5L399.9 300.0L390.9 300.6M452.3 251.2L444.7 254.4L437.2 253.8M408.1 269.7L417.8 270.8L426.5 264.6L433.1 261.7M418.3 282.5L428.8 282.8M428.8 282.8L430.6 289.2L432.9 295.7M413.4 271.0L418.3 282.5M399.9 281.9L402.4 271.8M399.9 289.5L414.7 292.0L418.3 282.5M326.9 212.7L327.5 204.4L328.0 197.2M341.0 211.1L341.5 195.9M351.8 208.6L350.2 195.9M355.6 207.8L357.9 194.0M334.6 197.4L341.5 185.6L349.2 185.6L354.1 191.4M359.4 174.1L359.4 180.6L349.2 185.6M314.7 191.7L319.5 192.2L321.3 202.4M435.7 199.8L433.1 203.7L434.4 210.1L439.0 210.1M427.3 215.2L435.5 213.4L439.0 210.1M435.5 213.4L435.5 226.8" fill="none" stroke="#fff" stroke-opacity="0.55" stroke-width="0.6" stroke-linejoin="round"/><path d="M236.9 284.5 L243.9 282.8 L250.9 280.8 L258.0 278.7 L265.0 276.3 L272.0 273.7 L279.0 271.0 L286.0 268.1 L293.0 265.0 L300.1 261.8 L307.1 258.5 L314.1 255.1 L321.1 251.6 L328.1 248.1 L335.2 244.4 L342.2 240.8 L349.2 237.1 L356.2 233.3 L363.2 229.6 L370.3 225.8 L377.3 222.1 L384.3 218.4 L391.3 214.7 L398.3 211.0 L405.3 207.4 L412.4 203.8 L419.4 200.4 L426.4 196.9 L433.4 193.6 L440.4 190.3 L447.5 187.2 L454.5 184.1 L461.5 181.2 L468.5 178.3 L475.5 175.6 L482.6 173.0 L489.6 170.5 L496.6 168.1 L503.6 165.9 L510.6 163.8 L517.6 161.8 L524.7 160.0 L531.7 158.3 L538.7 156.8 L545.7 155.3 L552.7 154.1 L559.8 153.0 L566.8 152.0 L573.8 151.1 L580.8 150.4 L587.8 149.9 L594.9 149.4 L601.9 149.1 L608.9 149.0 L615.9 148.9 L622.9 149.0 L629.9 149.2 L637.0 149.5 L644.0 150.0 L651.0 150.5" fill="none" stroke="#b9bec6" stroke-width="1" stroke-dasharray="4 2.5"/><path d="M0 59.900000000000006 Q28 79 74 121" fill="none" stroke="#b9bec6" stroke-width="1" stroke-dasharray="4 2.5"/><path d="M651 153 L696 99" fill="none" stroke="#b9bec6" stroke-width="1" stroke-dasharray="4 2.5"/><g class="lb"><text x="77.2" y="52.6" textLength="30.6" lengthAdjust="spacingAndGlyphs">CANADA</text><text x="97.4" y="111.0" textLength="26.0" lengthAdjust="spacingAndGlyphs">UNITED</text><text x="97.2" y="119.0" textLength="27.6" lengthAdjust="spacingAndGlyphs">STATES</text><text x="85.4" y="161.5" textLength="28.0" lengthAdjust="spacingAndGlyphs">MEXICO</text><text x="145.1" y="167.2" textLength="19.9" lengthAdjust="spacingAndGlyphs">CUBA</text><text x="160.7" y="217.3" textLength="38.0" lengthAdjust="spacingAndGlyphs">COLOMBIA</text><text x="155.2" y="250.8" textLength="18.3" lengthAdjust="spacingAndGlyphs">PERU</text><text x="215.9" y="249.7" textLength="24.7" lengthAdjust="spacingAndGlyphs">BRAZIL</text><text x="183.6" y="269.2" textLength="27.7" lengthAdjust="spacingAndGlyphs">BOLIVIA</text><text x="169.6" y="296.2" textLength="20.3" lengthAdjust="spacingAndGlyphs">CHILE</text><text x="300.6" y="3.5" textLength="31.3" lengthAdjust="spacingAndGlyphs">ICELAND</text><text x="393.8" y="3.5" textLength="30.5" lengthAdjust="spacingAndGlyphs">SWEDEN</text><text x="415.8" y="16.5" textLength="31.6" lengthAdjust="spacingAndGlyphs">FINLAND</text><text x="371.1" y="25.0" textLength="32.4" lengthAdjust="spacingAndGlyphs">NORWAY</text><text x="342.8" y="54.5" textLength="26.5" lengthAdjust="spacingAndGlyphs">UNITED</text><text x="342.3" y="62.7" textLength="35.2" lengthAdjust="spacingAndGlyphs">KINGDOM</text><text x="398.3" y="67.7" textLength="29.4" lengthAdjust="spacingAndGlyphs">POLAND</text><text x="429.1" y="78.7" textLength="32.1" lengthAdjust="spacingAndGlyphs">UKRAINE</text><text x="355.4" y="83.7" textLength="28.9" lengthAdjust="spacingAndGlyphs">FRANCE</text><text x="412.6" y="92.0" textLength="33.7" lengthAdjust="spacingAndGlyphs">ROMANIA</text><text x="380.9" y="104.2" textLength="19.4" lengthAdjust="spacingAndGlyphs">ITALY</text><text x="438.9" y="115.9" textLength="27.3" lengthAdjust="spacingAndGlyphs">TURKEY</text><text x="373.2" y="131.5" textLength="28.4" lengthAdjust="spacingAndGlyphs">TUNISIA</text><text x="333.1" y="137.0" textLength="38.1" lengthAdjust="spacingAndGlyphs">MOROCCO</text><text x="459.8" y="135.0" textLength="16.6" lengthAdjust="spacingAndGlyphs">IRAQ</text><text x="355.5" y="149.7" textLength="30.3" lengthAdjust="spacingAndGlyphs">ALGERIA</text><text x="395.0" y="152.6" textLength="20.0" lengthAdjust="spacingAndGlyphs">LIBYA</text><text x="425.2" y="154.4" textLength="22.4" lengthAdjust="spacingAndGlyphs">EGYPT</text><text x="463.1" y="158.9" textLength="22.5" lengthAdjust="spacingAndGlyphs">SAUDI</text><text x="463.2" y="166.9" textLength="26.5" lengthAdjust="spacingAndGlyphs">ARABIA</text><text x="495.0" y="168.6" textLength="22.5" lengthAdjust="spacingAndGlyphs">OMAN</text><text x="470.8" y="183.7" textLength="24.7" lengthAdjust="spacingAndGlyphs">YEMEN</text><text x="450.4" y="202.4" textLength="33.2" lengthAdjust="spacingAndGlyphs">ETHIOPIA</text><text x="445.8" y="223.5" textLength="24.0" lengthAdjust="spacingAndGlyphs">KENYA</text><text x="425.7" y="188.9" textLength="25.4" lengthAdjust="spacingAndGlyphs">SUDAN</text><text x="521.3" y="83.4" textLength="49.6" lengthAdjust="spacingAndGlyphs">KAZAKHSTAN</text><text x="510.7" y="106.8" textLength="45.1" lengthAdjust="spacingAndGlyphs">UZBEKISTAN</text><text x="487.9" y="136.2" textLength="16.8" lengthAdjust="spacingAndGlyphs">IRAN</text><text x="522.2" y="149.6" textLength="35.9" lengthAdjust="spacingAndGlyphs">PAKISTAN</text><text x="563.9" y="149.2" textLength="22.5" lengthAdjust="spacingAndGlyphs">NEPAL</text><text x="310.4" y="185.5" textLength="32.9" lengthAdjust="spacingAndGlyphs">SENEGAL</text><text x="345.5" y="179.8" textLength="17.3" lengthAdjust="spacingAndGlyphs">MALI</text><text x="372.7" y="179.8" textLength="21.6" lengthAdjust="spacingAndGlyphs">NIGER</text><text x="379.9" y="212.7" textLength="42.1" lengthAdjust="spacingAndGlyphs">CAMEROON</text><text x="437.8" y="240.8" textLength="37.1" lengthAdjust="spacingAndGlyphs">TANZANIA</text><text x="394.8" y="256.1" textLength="29.9" lengthAdjust="spacingAndGlyphs">ANGOLA</text><text x="392.8" y="280.6" textLength="30.8" lengthAdjust="spacingAndGlyphs">NAMIBIA</text><text x="468.6" y="275.5" textLength="52.1" lengthAdjust="spacingAndGlyphs">MADAGASCAR</text><text x="409.7" y="296.8" textLength="24.6" lengthAdjust="spacingAndGlyphs">SOUTH</text><text x="550.0" y="166.5" textLength="19.7" lengthAdjust="spacingAndGlyphs">INDIA</text><text x="555.5" y="205.0" textLength="38.1" lengthAdjust="spacingAndGlyphs">SRI LANKA</text><text x="649.7" y="230.6" textLength="39.4" lengthAdjust="spacingAndGlyphs">INDONESIA</text></g><circle cx="74.0" cy="120.8" r="25.7" fill="#0f2942"/><text x="74.2" y="125.4" font-size="10.6" font-weight="bold" fill="#fff" text-anchor="middle">56</text><circle cx="347.8" cy="105.3" r="20.3" fill="#0f2942"/><text x="348.0" y="109.9" font-size="10.6" font-weight="bold" fill="#fff" text-anchor="middle">13</text><circle cx="651.7" cy="153.5" r="28.6" fill="#0f2942"/><text x="651.5" y="157.9" font-size="10.2" font-weight="bold" fill="#fff" text-anchor="middle">82</text><rect x="352.0" y="84.5" width="18.5" height="9.3" rx="4.6" fill="#fff" filter="url(#sh)"/><circle cx="357.0" cy="88.6" r="3.9" fill="#f2545b"/><text x="365.9" y="91.8" font-size="7.5" font-weight="bold" fill="#2b2f36" text-anchor="middle">1</text><rect x="661.0" y="126.0" width="18.4" height="10.0" rx="4.6" fill="#fff" filter="url(#sh)"/><circle cx="666.3" cy="131.2" r="3.8" fill="#f2545b"/><text x="675.3" y="134.2" font-size="7.5" font-weight="bold" fill="#2b2f36" text-anchor="middle">1</text></svg>
<svg class="abs" style="left:4px;top:279px" width="64" height="16" viewBox="0 0 64 16"><circle cx="7.4" cy="7.7" r="5.8" fill="#fff" stroke="#b8bcc4" stroke-width="1"/><path d="M4.6 10.6 L5 7.2 A3.2 3.2 0 1 1 8 10.3 Z" fill="#b8bcc4"/><circle cx="7.9" cy="7.3" r="1.2" fill="#fff"/><text x="15.8" y="10.6" font-size="10.2" font-weight="bold" fill="#fff" stroke="#a9aeb7" stroke-width="1.1" paint-order="stroke" letter-spacing="-0.2">mapbox</text></svg></div>
<div class="a" style="left:532.00px;top:402.30px;width:177.60px;height:12.50px;background:rgba(255,255,255,0.55);"></div>
<div class="t" style="left:535.60px;top:405.14px;font-size:7.4px;line-height:7.4px;color:#50545b;letter-spacing:0.274px;">© Mapbox © OpenStreetMap</div>
<div class="t" style="left:642.2px;top:405.14px;font-size:7.4px;line-height:7.4px;color:#3d4148;font-weight:bold;letter-spacing:0.009px">Improve this map</div>
<div class="a" style="left:687.10px;top:350.00px;width:17.80px;height:17.50px;background:#fff;border-radius:2px;box-shadow:0 0 0 1px rgba(0,0,0,.07);"></div>
<svg class="a" style="left:690px;top:352.5px" width="12" height="12" viewBox="0 0 12 12"><circle cx="6" cy="6" r="4.8" fill="#151515"/><path d="M4.5 0.5V11.5M7.5 0.5V11.5M0.5 6.1H11.5" stroke="#fff" stroke-width="0.75"/></svg>
<div class="a" style="left:687.10px;top:374.00px;width:17.80px;height:36.80px;background:#fff;border-radius:2px;box-shadow:0 0 0 1px rgba(0,0,0,.07);"></div>
<div class="a" style="left:691.90px;top:381.30px;width:8.40px;height:1.60px;background:#1e1e1e;"></div>
<div class="a" style="left:695.30px;top:377.90px;width:1.60px;height:8.40px;background:#1e1e1e;"></div>
<div class="a" style="left:691.90px;top:399.40px;width:8.40px;height:1.60px;background:#1e1e1e;"></div>

<div class="a" style="left:722px;top:117px;width:341px;height:298px;border:1px solid #dde4ef;box-sizing:border-box"></div>
<div class="a" style="left:16px;top:428px;width:694px;height:112px;border:1px solid #dde4ef;box-sizing:border-box"></div>
<div class="a" style="left:722px;top:428px;width:341px;height:112px;border:1px solid #dde4ef;box-sizing:border-box"></div>
<div class="t" style="left:735.80px;top:133.22px;font-size:9.9px;line-height:9.9px;color:#23272e;font-weight:bold;letter-spacing:-0.027px;">Tasks</div>
<div class="a" style="left:771.30px;top:133.00px;width:12.50px;height:10.00px;background:#5065df;border-radius:5.0px;"></div>
<div class="t" style="left:775.44px;top:133.97px;font-size:7.6px;line-height:7.6px;color:#fff;font-weight:bold;">5</div>
<div class="t" style="left:1022.00px;top:134.07px;font-size:8.9px;line-height:8.9px;color:#6f7888;letter-spacing:0.013px;text-decoration:underline;text-decoration-color:#9aa2ae;text-underline-offset:1px;">See all</div>
<div class="a" style="left:735.80px;top:155.00px;width:313.50px;height:1.00px;background:#9ea3a9;"></div>
<svg class="a" style="left:735.70px;top:163.70px" width="23.4" height="23.4" viewBox="0 0 23.4 23.4"><circle cx="11.7" cy="11.7" r="11.6" fill="#f25a5c"/><path d="M7.6 8.2H15.8V14.2H9.7L7.6 16Z" fill="#fff"/><path d="M9.5 10.4H13.9M9.5 12.2H13.9" stroke="#f25a5c" stroke-width="0.9"/></svg>
<div class="t" style="left:771.80px;top:168.78px;font-size:9px;line-height:9px;color:#25292f;font-weight:bold;letter-spacing:0.215px;">FLEX–537471</div>
<div class="t" style="left:834.50px;top:168.87px;font-size:8.9px;line-height:8.9px;color:#3e444c;letter-spacing:-0.222px;"> · test</div>
<svg class="a" style="left:1038.20px;top:168.60px" width="7.80" height="8.40" viewBox="0 0 8 9"><path d="M0.6 0.6H7.4V8.2L4 5.8L0.6 8.2Z" fill="none" stroke="#cfd7e6" stroke-width="1"/></svg>
<svg class="a" style="left:772.00px;top:188.60px" width="10" height="8" viewBox="0 0 10 8"><path d="M0.3 0.6H2.1V6.2H9.6V7.7H0.3Z" fill="#4f5663"/><path d="M3.1 1.5H4.2V5.6H3.1Z M5.2 1.5H6.3V5.6H5.2Z M7.3 2.2H8.4V5.6H7.3Z" fill="#a9afb8"/></svg>
<div class="t" style="left:787.40px;top:189.75px;font-size:7.85px;line-height:7.85px;color:#737b87;letter-spacing:0.003px;">1 quote ready for view</div>
<div class="t" style="left:1009.00px;top:189.21px;font-size:9.2px;line-height:9.2px;color:#25292f;font-weight:bold;letter-spacing:0.180px;">May 11th</div>
<div class="a" style="left:735.60px;top:220.00px;width:312.70px;height:1.00px;background:#e6ebf2;"></div>
<svg class="a" style="left:735.70px;top:228.70px" width="23.4" height="23.4" viewBox="0 0 23.4 23.4"><circle cx="11.7" cy="11.7" r="11.6" fill="#f25a5c"/><path d="M7.6 8.2H15.8V14.2H9.7L7.6 16Z" fill="#fff"/><path d="M9.5 10.4H13.9M9.5 12.2H13.9" stroke="#f25a5c" stroke-width="0.9"/></svg>
<div class="t" style="left:771.80px;top:233.78px;font-size:9px;line-height:9px;color:#25292f;font-weight:bold;letter-spacing:0.215px;">FLEX–572270</div>
<div class="t" style="left:834.50px;top:233.87px;font-size:8.9px;line-height:8.9px;color:#3e444c;letter-spacing:-0.142px;"> · THIS IS JUST A TEST — NOT A REAL SHIP...</div>
<svg class="a" style="left:1038.20px;top:233.60px" width="7.80" height="8.40" viewBox="0 0 8 9"><path d="M0.3 0.3H7.7V8.7L4 6L0.3 8.7Z" fill="#2f3540"/></svg>
<svg class="a" style="left:772.00px;top:253.60px" width="10" height="8" viewBox="0 0 10 8"><path d="M0.3 0.6H2.1V6.2H9.6V7.7H0.3Z" fill="#4f5663"/><path d="M3.1 1.5H4.2V5.6H3.1Z M5.2 1.5H6.3V5.6H5.2Z M7.3 2.2H8.4V5.6H7.3Z" fill="#a9afb8"/></svg>
<div class="t" style="left:787.40px;top:254.75px;font-size:7.85px;line-height:7.85px;color:#737b87;letter-spacing:0.003px;">1 quote ready for view</div>
<div class="t" style="left:1020.00px;top:254.21px;font-size:9.2px;line-height:9.2px;color:#25292f;font-weight:bold;letter-spacing:-0.049px;">Jul 9th</div>
<div class="a" style="left:735.60px;top:285.00px;width:312.70px;height:1.00px;background:#e6ebf2;"></div>
<svg class="a" style="left:735.70px;top:293.70px" width="23.4" height="23.4" viewBox="0 0 23.4 23.4"><circle cx="11.7" cy="11.7" r="11.6" fill="#f25a5c"/><path d="M7.6 8.2H15.8V14.2H9.7L7.6 16Z" fill="#fff"/><path d="M9.5 10.4H13.9M9.5 12.2H13.9" stroke="#f25a5c" stroke-width="0.9"/></svg>
<div class="t" style="left:771.80px;top:298.78px;font-size:9px;line-height:9px;color:#25292f;font-weight:bold;letter-spacing:0.215px;">FLEX–583623</div>
<div class="t" style="left:834.50px;top:298.87px;font-size:8.9px;line-height:8.9px;color:#3e444c;letter-spacing:0.014px;"> · PO 55087 New Logo Sneakers</div>
<svg class="a" style="left:1038.20px;top:298.60px" width="7.80" height="8.40" viewBox="0 0 8 9"><path d="M0.6 0.6H7.4V8.2L4 5.8L0.6 8.2Z" fill="none" stroke="#cfd7e6" stroke-width="1"/></svg>
<svg class="a" style="left:772.00px;top:318.60px" width="10" height="8" viewBox="0 0 10 8"><path d="M0.3 0.6H2.1V6.2H9.6V7.7H0.3Z" fill="#4f5663"/><path d="M3.1 1.5H4.2V5.6H3.1Z M5.2 1.5H6.3V5.6H5.2Z M7.3 2.2H8.4V5.6H7.3Z" fill="#a9afb8"/></svg>
<div class="t" style="left:787.40px;top:319.75px;font-size:7.85px;line-height:7.85px;color:#737b87;letter-spacing:0.003px;">1 quote ready for view</div>
<div class="t" style="left:1014.90px;top:319.21px;font-size:9.2px;line-height:9.2px;color:#25292f;font-weight:bold;letter-spacing:-0.045px;">Jul 30th</div>
<svg class="a" style="left:735.70px;top:358.00px" width="23.4" height="23.4" viewBox="0 0 23.4 23.4"><circle cx="11.7" cy="11.7" r="11.6" fill="#f25a5c"/><rect x="7.2" y="8.3" width="9" height="6.8" rx="0.8" fill="#fff"/><rect x="7.2" y="10" width="9" height="1.5" fill="#f25a5c"/></svg>
<div class="t" style="left:771.30px;top:360.00px;font-size:9.1px;line-height:9.1px;color:#25292f;font-weight:bold;letter-spacing:-0.014px;">Billing</div>
<div class="t" style="left:771.30px;top:377.71px;font-size:9.2px;line-height:9.2px;color:#3e444c;letter-spacing:-0.001px;">20 invoices ready for review</div>
<div class="t" style="left:29.60px;top:443.88px;font-size:10.3px;line-height:10.3px;color:#23272e;font-weight:bold;letter-spacing:0.003px;">Priority &amp; Bookmarked Shipments</div>
<div class="a" style="left:204.90px;top:444.50px;width:12.30px;height:9.70px;background:#5065df;border-radius:4.8px;"></div>
<div class="t" style="left:208.94px;top:445.17px;font-size:7.6px;line-height:7.6px;color:#fff;font-weight:bold;">7</div>
<div class="a" style="left:29.00px;top:466.00px;width:667.00px;height:1.00px;background:#9ea3a9;"></div>
<svg class="a" style="left:29px;top:481.2px" width="23.4" height="23.4" viewBox="0 0 23.4 23.4"><circle cx="11.7" cy="11.7" r="11.6" fill="#c8d3e7"/><path d="M7.3 9.2H12.6V14.3H7.3Z M13 10.8H15L16.3 12.5V14.3H13Z" fill="#fff"/><circle cx="9" cy="14.6" r="1.1" fill="#fff"/><circle cx="14.3" cy="14.6" r="1.1" fill="#fff"/></svg>
<div class="t" style="left:66.00px;top:479.08px;font-size:9px;line-height:9px;color:#25292f;font-weight:bold;letter-spacing:0.147px;">FLEX–76445</div>
<div class="t" style="left:122.80px;top:479.17px;font-size:8.9px;line-height:8.9px;color:#3e444c;letter-spacing:0.046px;"> · VND–RAIL–PO4711</div>
<svg class="a" style="left:297.2px;top:478.4px" width="7" height="10" viewBox="0 0 7 10"><path d="M4.4 0.2L0.6 5.6H3.2L2.4 9.8L6.4 4.2H3.8Z" fill="#1f242b"/></svg>
<svg class="a" style="left:311.80px;top:480.00px" width="7.60" height="8.00" viewBox="0 0 8 9"><path d="M0.6 0.6H7.4V8.2L4 5.8L0.6 8.2Z" fill="none" stroke="#cfd7e6" stroke-width="1"/></svg>
<div class="a" style="left:348.80px;top:480.90px;width:5.30px;height:4.20px;background:#f2545b;"></div>
<div class="a" style="left:355.90px;top:481.90px;width:185.70px;height:1.70px;background:#c3cfe4;border-radius:1px;"></div>
<svg class="a" style="left:348.6px;top:500px" width="11" height="7" viewBox="0 0 11 7"><path d="M0.3 0.3H6.3V5.6H0.3Z M6.8 1.8H8.8L10.6 3.9V5.6H6.8Z" fill="#5d6470"/><circle cx="2.2" cy="5.9" r="1" fill="#5d6470"/><circle cx="8.6" cy="5.9" r="1" fill="#5d6470"/></svg>
<div class="t" style="left:364.00px;top:499.47px;font-size:7.95px;line-height:7.95px;color:#737b87;letter-spacing:0.012px;">In Transit to Final Destination · No updates</div>
<div class="t" style="left:584.30px;top:499.31px;font-size:7.9px;line-height:7.9px;color:#737b87;letter-spacing:0.032px;">Vandelay ( Miami )</div>
<div class="t" style="left:651.50px;top:498.38px;font-size:9px;line-height:9px;color:#25292f;font-weight:bold;letter-spacing:0.200px;">· Feb 14th</div>
<div class="a" style="left:29.00px;top:517.50px;width:667.00px;height:1.00px;background:#e6ebf2;"></div>
<div class="t" style="left:735.60px;top:444.22px;font-size:9.9px;line-height:9.9px;color:#23272e;font-weight:bold;letter-spacing:-0.037px;">Bookings</div>
<div class="a" style="left:788.90px;top:444.50px;width:16.90px;height:9.70px;background:#5065df;border-radius:4.8px;"></div>
<div class="t" style="left:793.12px;top:445.17px;font-size:7.6px;line-height:7.6px;color:#fff;font-weight:bold;">77</div>
<div class="t" style="left:1022.00px;top:445.07px;font-size:8.9px;line-height:8.9px;color:#6f7888;letter-spacing:0.013px;text-decoration:underline;text-decoration-color:#9aa2ae;text-underline-offset:1px;">See all</div>
<div class="a" style="left:735.60px;top:466.00px;width:313.70px;height:1.00px;background:#9ea3a9;"></div>
<svg class="a" style="left:735.4px;top:475px" width="23.4" height="23.4" viewBox="0 0 23.4 23.4"><circle cx="11.7" cy="11.7" r="11.6" fill="#c8d3e7"/><circle cx="11.7" cy="11.7" r="4.2" fill="#fff"/><text x="11.7" y="14.2" font-size="6.5" font-weight="bold" fill="#c8d3e7" text-anchor="middle" font-family="Liberation Sans">$</text></svg>
<div class="t" style="left:771.30px;top:479.08px;font-size:9px;line-height:9px;color:#25292f;font-weight:bold;letter-spacing:0.315px;">FLEX–335349</div>
<div class="t" style="left:834.60px;top:479.17px;font-size:8.9px;line-height:8.9px;color:#3e444c;letter-spacing:-0.301px;"> · 12</div>
<svg class="a" style="left:1038.40px;top:480.00px" width="7.80" height="8.00" viewBox="0 0 8 9"><path d="M0.6 0.6H7.4V8.2L4 5.8L0.6 8.2Z" fill="none" stroke="#cfd7e6" stroke-width="1"/></svg>
<svg class="a" style="left:772.20px;top:499.50px" width="10" height="8" viewBox="0 0 10 8"><path d="M0.3 0.6H2.1V6.2H9.6V7.7H0.3Z" fill="#4f5663"/><path d="M3.1 1.5H4.2V5.6H3.1Z M5.2 1.5H6.3V5.6H5.2Z M7.3 2.2H8.4V5.6H7.3Z" fill="#a9afb8"/></svg>
<div class="t" style="left:786.90px;top:499.94px;font-size:8.1px;line-height:8.1px;color:#737b87;letter-spacing:-0.012px;">Waiting for pricing</div>

</body></html>
